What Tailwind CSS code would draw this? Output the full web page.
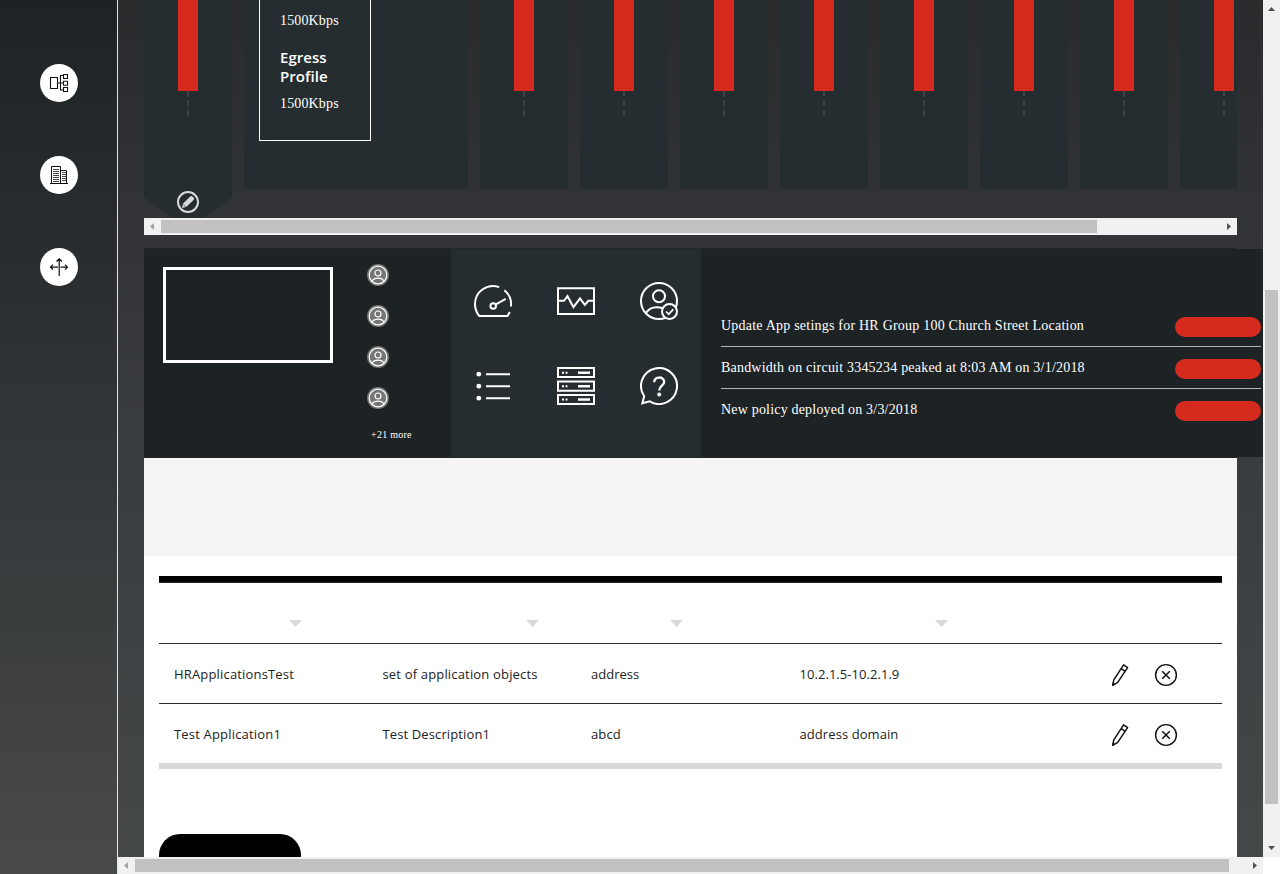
<!DOCTYPE html>
<html lang="en">
<head>
<meta charset="utf-8">
<title>Network dashboard</title>
<script src="https://cdn.jsdelivr.net/npm/@tailwindcss/browser@4"></script>
</head>
<body class="w-[1280px] h-[874px] overflow-hidden flex font-['Liberation_Serif',serif]">

<svg class="hidden">
  <symbol id="user" viewBox="0 0 22 22">
    <circle cx="11" cy="11" r="11" fill="#757676"/>
    <g fill="none" stroke="#fff" stroke-width="1.2"><circle cx="11" cy="11" r="8.8"/><circle cx="11" cy="9" r="3"/><path d="M5 17.2C7 13.1 15 13.1 17 17.2"/></g>
  </symbol>
  <symbol id="pencil" viewBox="0 0 18 24">
    <path d="M1.7 22.3L2.8 16.8L12.6 1.9L16.6 4.7L6.7 19.4ZM10.2 5.6L14.2 8.4" fill="none" stroke="#111" stroke-width="1.5" stroke-linejoin="round"/>
    <path d="M1.2 23L1.8 19.4L4 21.1Z" fill="#111"/>
  </symbol>
  <symbol id="close" viewBox="0 0 24 24">
    <circle cx="12" cy="12" r="10.4" fill="none" stroke="#111" stroke-width="1.4"/><path d="M8.2 8.2L15.8 15.8M15.8 8.2L8.2 15.8" stroke="#111" stroke-width="1.5"/>
  </symbol>
  <symbol id="dash" viewBox="0 0 2 25"><path d="M1 0V5.5M1 9.5V15.5M1 19.5V25" stroke="#3c4346" stroke-width="2"/></symbol>
</svg>

<nav class="w-[118px] shrink-0 border-r border-[#e2e4e4] bg-linear-to-b from-[#1d2225] to-[#484a4a] flex flex-col items-center pt-16 gap-[54px]">
  <a class="size-[38px] rounded-full bg-white flex items-center justify-center">
    <svg class="size-5" viewBox="0 0 20 20" fill="none" stroke="#111" stroke-width="1.1"><path d="M1.5 4.5h7v11h-7zM8.5 10H14M14 2.5H11.5V17H14"/><path d="M14.5 1.5h4v4h-4zM14.5 8.2h4v4h-4zM14.5 14.5h4v4h-4z"/></svg>
  </a>
  <a class="size-[38px] rounded-full bg-white flex items-center justify-center">
    <svg class="size-5" viewBox="0 0 20 20" fill="none" stroke="#111" stroke-width="1"><path d="M1 18.5h18M2.5 18V1.5h9V18M11.5 5.5h6V18"/><path d="M4 4.5h6M4 6.5h6M4 8.5h6M4 10.5h6M4 12.5h6M4 14.5h6M4 16.5h6M13 7.5h4M13 9.5h4M13 11.5h4M13 13.5h4M13 15.5h4" stroke-width=".8"/></svg>
  </a>
  <a class="size-[38px] rounded-full bg-white flex items-center justify-center">
    <svg class="size-5" viewBox="0 0 20 20" fill="none" stroke="#111" stroke-width="1.2"><path d="M10.2 19V2M7.5 4.5L10.2 1.8L13 4.5M1.5 10.2H9M11.5 10.2H18.5M4 7.7L1.5 10.2L4 12.7M16 7.7L18.5 10.2L16 12.7"/></svg>
  </a>
</nav>

<div class="w-[1145px] shrink-0 flex flex-col">
  <main class="h-[857px] overflow-hidden bg-linear-to-b from-[#292b2d] via-[#393c3f] to-[#454848] pl-[26px] flex flex-col">

    <section class="w-[1093px] h-[218px] shrink-0 overflow-hidden flex gap-3">
      <div class="w-[88px] h-[218px] shrink-0 bg-[#262d30] [clip-path:polygon(0_0,100%_0,100%_197px,60px_100%,28px_100%,0_197px)] flex flex-col items-center">
        <div class="w-5 h-[91px] bg-[#d52b1e]"></div>
        <svg class="w-0.5 h-[25px]"><use href="#dash"/></svg>
        <svg class="size-6 mt-[74px]" viewBox="0 0 24 24"><circle cx="12" cy="12" r="10" fill="none" stroke="#d8dad9" stroke-width="2"/><path d="M6 18L6.9 13.8L14.2 6.4Q15.3 5.4 16.4 6.4L17.7 7.7Q18.6 8.8 17.6 9.9L10.2 17.1Z" fill="#d8dad9"/><path d="M7.3 14.5L9.6 16.8" stroke="#262d30" stroke-width=".7"/></svg>
      </div>
      <div class="w-[224px] h-[189px] shrink-0 bg-[#262d30] pl-[15px]">
        <div class="w-28 h-[141px] border border-t-0 border-white text-white pl-5 flex flex-col">
          <p class="mt-[13px] h-4 text-sm leading-4 tracking-[0.15px]">1500Kbps</p>
          <h4 class="mt-[19px] w-16 font-['Open_Sans',sans-serif] font-semibold text-[15px] leading-[19px] tracking-[0.05px]">Egress Profile</h4>
          <p class="mt-[10px] text-sm leading-4 tracking-[0.15px]">1500Kbps</p>
        </div>
      </div>
      <div class="w-[88px] h-[189px] shrink-0 bg-[#262d30] flex flex-col items-center"><div class="w-5 h-[91px] bg-[#d52b1e]"></div><svg class="w-0.5 h-[25px]"><use href="#dash"/></svg></div>
      <div class="w-[88px] h-[189px] shrink-0 bg-[#262d30] flex flex-col items-center"><div class="w-5 h-[91px] bg-[#d52b1e]"></div><svg class="w-0.5 h-[25px]"><use href="#dash"/></svg></div>
      <div class="w-[88px] h-[189px] shrink-0 bg-[#262d30] flex flex-col items-center"><div class="w-5 h-[91px] bg-[#d52b1e]"></div><svg class="w-0.5 h-[25px]"><use href="#dash"/></svg></div>
      <div class="w-[88px] h-[189px] shrink-0 bg-[#262d30] flex flex-col items-center"><div class="w-5 h-[91px] bg-[#d52b1e]"></div><svg class="w-0.5 h-[25px]"><use href="#dash"/></svg></div>
      <div class="w-[88px] h-[189px] shrink-0 bg-[#262d30] flex flex-col items-center"><div class="w-5 h-[91px] bg-[#d52b1e]"></div><svg class="w-0.5 h-[25px]"><use href="#dash"/></svg></div>
      <div class="w-[88px] h-[189px] shrink-0 bg-[#262d30] flex flex-col items-center"><div class="w-5 h-[91px] bg-[#d52b1e]"></div><svg class="w-0.5 h-[25px]"><use href="#dash"/></svg></div>
      <div class="w-[88px] h-[189px] shrink-0 bg-[#262d30] flex flex-col items-center"><div class="w-5 h-[91px] bg-[#d52b1e]"></div><svg class="w-0.5 h-[25px]"><use href="#dash"/></svg></div>
      <div class="w-[88px] h-[189px] shrink-0 bg-[#262d30] flex flex-col items-center"><div class="w-5 h-[91px] bg-[#d52b1e]"></div><svg class="w-0.5 h-[25px]"><use href="#dash"/></svg></div>
    </section>

    <div class="w-[1093px] h-[17px] shrink-0 bg-[#f1f1f1] flex items-center justify-between">
      <svg class="size-[17px] shrink-0" viewBox="0 0 17 17"><path d="M10 5V12L6 8.5Z" fill="#a3a3a3"/></svg>
      <div class="w-[936px] h-[13px] bg-[#c1c1c1] mr-auto"></div>
      <svg class="size-[17px] shrink-0" viewBox="0 0 17 17"><path d="M7 5V12L11 8.5Z" fill="#505050"/></svg>
    </div>

    <div class="mt-[13px] w-[1093px] h-px shrink-0 bg-[#20272a]"></div>
    <section class="h-[208px] shrink-0 flex bg-[#1d2225]">
      <div class="w-[307px] shrink-0 flex pl-[19px] pt-[18px]">
        <div class="w-[170px] h-24 border-3 border-white"></div>
        <div class="ml-[34px] -mt-[3px] flex flex-col gap-[19px]">
          <svg class="size-[22px]"><use href="#user"/></svg>
          <svg class="size-[22px]"><use href="#user"/></svg>
          <svg class="size-[22px]"><use href="#user"/></svg>
          <svg class="size-[22px]"><use href="#user"/></svg>
          <span class="ml-1 mt-px text-[10px] leading-3 tracking-[0.25px] text-white whitespace-nowrap w-0">+21 more</span>
        </div>
      </div>
      <div class="w-[250px] shrink-0 bg-[#262d30] grid grid-cols-[38px_38px_38px] grid-rows-[38px_38px] gap-x-[45px] gap-y-[47px] pl-[23px] pt-[33px]">
        <svg class="size-[38px]" viewBox="0 0 38 38" fill="none" stroke="#fff" stroke-width="2"><path d="M25.2 5.1A18 18 0 0 0 1 22A18 18 0 0 0 5.3 34H33.5L35.8 30M30.3 8.3A18 18 0 0 1 37 24.5"/><circle cx="19.2" cy="24" r="2.8"/><path d="M21.8 22.3L31.8 16.8"/></svg>
        <svg class="size-[38px]" viewBox="0 0 38 38" fill="none" stroke="#fff" stroke-width="2"><path d="M1 6.2H37V32H1ZM1 18.8H7L10.5 14.2L16.5 25.2L23 16.5L27.8 22.8L31.3 18.8H37"/></svg>
        <svg class="size-[38px]" viewBox="0 0 38 38" fill="none" stroke="#fff" stroke-width="2"><circle cx="19" cy="19" r="18"/><circle cx="19" cy="14.2" r="6"/><path d="M6 31C9.5 25.5 16 24.3 22.5 26"/><circle cx="29.5" cy="29.5" r="7.5" fill="#262d30"/><path d="M26 29.5L28.7 32.2L33.3 27.3" stroke-width="1.7"/></svg>
        <svg class="size-[38px]" viewBox="0 0 38 38" fill="none" stroke="#fff" stroke-width="2"><path d="M12 7.2H36M12 19.2H36M12 31.2H36"/><g fill="#fff" stroke="none"><circle cx="4.8" cy="7.2" r="2.4"/><circle cx="4.8" cy="19.2" r="2.4"/><circle cx="4.8" cy="31.2" r="2.4"/></g></svg>
        <svg class="size-[38px]" viewBox="0 0 38 38" fill="none" stroke="#fff" stroke-width="2"><path d="M1 1H37V10H1ZM1 14.5H37V23.8H1ZM1 28H37V37H1Z"/><path d="M21 5.7H33M21 19.2H33M21 32.5H33" stroke-width="2.4"/><path d="M5 5.7H7M8.5 5.7H10.5M5 19.2H7M8.5 19.2H10.5M5 32.5H7M8.5 32.5H10.5"/></svg>
        <svg class="size-[38px]" viewBox="0 0 38 38" fill="none" stroke="#fff" stroke-width="2"><path d="M9.7 34.4A18 18 0 1 0 4.2 29.2L2.3 36.3Z"/><path d="M14.2 15.2C14.2 9 24.2 9 24.2 15C24.2 18.8 19.2 18.8 19.2 23.5" stroke-width="2.3"/><circle cx="19.2" cy="27.6" r="2" fill="#fff" stroke="none"/></svg>
      </div>
      <div class="flex-1 pl-5 pr-0.5 pt-[56px] text-white text-sm">
        <div class="h-[42px] border-b border-[#b0b2b2] flex items-center justify-between"><span class="leading-4 tracking-[0.22px]">Update App setings for HR Group 100 Church Street Location</span><span class="w-[86px] h-5 mt-[3px] rounded-full bg-[#d52b1e]"></span></div>
        <div class="h-[42px] border-b border-[#b0b2b2] flex items-center justify-between"><span class="leading-4 tracking-[0.205px]">Bandwidth on circuit 3345234 peaked at 8:03 AM on 3/1/2018</span><span class="w-[86px] h-5 mt-[3px] rounded-full bg-[#d52b1e]"></span></div>
        <div class="h-[41px] flex items-center justify-between"><span class="leading-4 tracking-[0.19px]">New policy deployed on 3/3/2018</span><span class="w-[86px] h-5 mt-[3px] rounded-full bg-[#d52b1e]"></span></div>
      </div>
    </section>
    <div class="w-[1093px] h-px shrink-0 bg-[#20272a]"></div>

    <section class="w-[1093px] flex-1 bg-white">
      <div class="h-[98px] bg-[#f5f5f5]"></div>
      <div class="px-[15px] pt-5">
        <div class="h-[7px] bg-black border-b border-[#262d30]"></div>
        <div class="h-[61px] border-b border-[#262d30] flex pt-[37px] pl-[130px]">
          <svg class="w-[13px] h-[7px]" viewBox="0 0 13 7"><path d="M0 0H13L6.5 7Z" fill="#d8dad9"/></svg>
          <svg class="w-[13px] h-[7px] ml-[224px]" viewBox="0 0 13 7"><path d="M0 0H13L6.5 7Z" fill="#d8dad9"/></svg>
          <svg class="w-[13px] h-[7px] ml-[131px]" viewBox="0 0 13 7"><path d="M0 0H13L6.5 7Z" fill="#d8dad9"/></svg>
          <svg class="w-[13px] h-[7px] ml-[252px]" viewBox="0 0 13 7"><path d="M0 0H13L6.5 7Z" fill="#d8dad9"/></svg>
        </div>
        <div class="h-[60px] border-b border-[#262d30] grid grid-cols-[208.5px_208.5px_208.5px_311px_auto] items-center pl-[15px] pt-[3px] font-['Open_Sans',sans-serif] text-[13px] text-[#1d2225]">
          <span class="tracking-[0.17px]">HRApplicationsTest</span><span class="tracking-[0.17px]">set of application objects</span><span>address</span><span class="tracking-[0.05px]">10.2.1.5-10.2.1.9</span>
          <span class="flex items-center gap-[25px]"><svg class="w-[18px] h-6"><use href="#pencil"/></svg><svg class="size-6"><use href="#close"/></svg></span>
        </div>
        <div class="h-[65px] border-b-6 border-[#d8dad9] grid grid-cols-[208.5px_208.5px_208.5px_311px_auto] items-center pl-[15px] pt-[3px] font-['Open_Sans',sans-serif] text-[13px] text-[#1d2225]">
          <span class="tracking-[0.18px]">Test Application1</span><span class="tracking-[0.12px]">Test Description1</span><span class="tracking-[0.15px]">abcd</span><span class="tracking-[0.08px]">address domain</span>
          <span class="flex items-center gap-[25px]"><svg class="w-[18px] h-6"><use href="#pencil"/></svg><svg class="size-6"><use href="#close"/></svg></span>
        </div>
        <div class="mt-[65px] w-[142px] h-[42px] rounded-[21px] bg-black"></div>
      </div>
    </section>
  </main>

  <div class="h-[17px] shrink-0 bg-[#f1f1f1] flex items-center">
    <svg class="size-[17px] shrink-0" viewBox="0 0 17 17"><path d="M10 5V12L6 8.5Z" fill="#a3a3a3"/></svg>
    <div class="w-[1094px] h-[13px] bg-[#c1c1c1] mr-auto"></div>
    <svg class="size-[17px] shrink-0" viewBox="0 0 17 17"><path d="M7 5V12L11 8.5Z" fill="#505050"/></svg>
  </div>
</div>

<div class="w-[17px] h-[857px] shrink-0 bg-[#f1f1f1] flex flex-col items-center">
  <svg class="size-[17px] shrink-0" viewBox="0 0 17 17"><path d="M5 11H12L8.5 7Z" fill="#505050"/></svg>
  <div class="mt-[273px] w-[13px] h-[514px] bg-[#c1c1c1] mb-auto"></div>
  <svg class="size-[17px] shrink-0" viewBox="0 0 17 17"><path d="M5 6H12L8.5 10Z" fill="#505050"/></svg>
</div>
</body>
</html>
